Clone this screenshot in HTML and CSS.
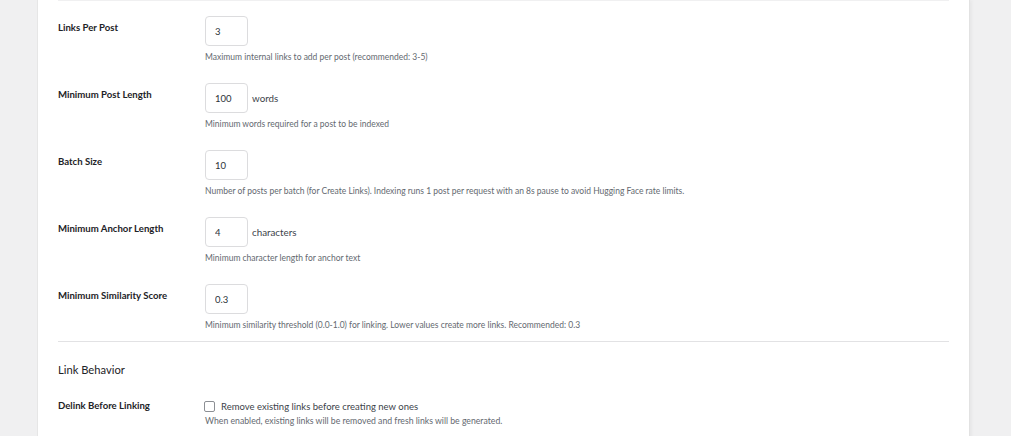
FILE: index.html
```html
<!DOCTYPE html>
<html lang="en">
<head>
<meta charset="utf-8">
<title>Settings</title>
<link rel="stylesheet" href="styles.css">
</head>
<body>
<div class="page">
  <div class="card">
    <hr class="sep sep-top">
    <div class="row">
      <div class="label">Links Per Post</div>
      <div class="field">
        <div class="control"><input class="num" type="text" value="3"></div>
        <p class="desc">Maximum internal links to add per post (recommended: 3-5)</p>
      </div>
    </div>
    <div class="row">
      <div class="label">Minimum Post Length</div>
      <div class="field">
        <div class="control"><input class="num" type="text" value="100"><span class="unit">words</span></div>
        <p class="desc">Minimum words required for a post to be indexed</p>
      </div>
    </div>
    <div class="row">
      <div class="label">Batch Size</div>
      <div class="field">
        <div class="control"><input class="num" type="text" value="10"></div>
        <p class="desc">Number of posts per batch (for Create Links). Indexing runs 1 post per request with an 8s pause to avoid Hugging Face rate limits.</p>
      </div>
    </div>
    <div class="row">
      <div class="label">Minimum Anchor Length</div>
      <div class="field">
        <div class="control"><input class="num" type="text" value="4"><span class="unit">characters</span></div>
        <p class="desc">Minimum character length for anchor text</p>
      </div>
    </div>
    <div class="row">
      <div class="label">Minimum Similarity Score</div>
      <div class="field">
        <div class="control"><input class="num" type="text" value="0.3"></div>
        <p class="desc">Minimum similarity threshold (0.0-1.0) for linking. Lower values create more links. Recommended: 0.3</p>
      </div>
    </div>
    <hr class="sep sep-mid">
    <h2 class="section-title">Link Behavior</h2>
    <div class="row row-check">
      <div class="label">Delink Before Linking</div>
      <div class="field">
        <label class="check"><span class="box"></span><span>Remove existing links before creating new ones</span></label>
        <p class="desc desc-check">When enabled, existing links will be removed and fresh links will be generated.</p>
      </div>
    </div>
  </div>
</div>
</body>
</html>
```
FILE: styles.css
```css
html, body {
  margin: 0;
  padding: 0;
  background: #f0f0f1;
  height: 100%;
  overflow: hidden;
}
body {
  font-family: "Lato", "Noto Sans", sans-serif;
  color: #1d2327;
}
.page {
  padding-left: 37px;
  width: 933px;
}
.card {
  background: #fff;
  border-left: 1px solid #e6e6e6;
  border-right: 1px solid #e2e2e2;
  box-shadow: 2px 0 3px rgba(0, 0, 0, 0.04);
  padding: 0 20px 40px;
  min-height: 436px;
  box-sizing: border-box;
}
.sep {
  border: 0;
  height: 1px;
  margin: 0;
}
.sep-top {
  background: #f0f0f1;
}
.sep-mid {
  background: #e2e2e4;
  margin-top: 5px;
}
.row {
  display: flex;
  height: 67px;
  box-sizing: border-box;
  padding-top: 15px;
}
.label {
  width: 147px;
  flex: none;
  font-size: 9.6px;
  font-weight: 700;
  line-height: 14px;
  padding-top: 5px;
  color: #1d2327;
}
.field {
  display: flex;
  flex-direction: column;
}
.control {
  display: flex;
  align-items: center;
  gap: 4px;
  height: 30px;
}
.num {
  width: 43px;
  height: 30px;
  box-sizing: border-box;
  border: 1px solid #dcdcde;
  border-radius: 4px;
  padding: 0 0 0 9px;
  font-family: inherit;
  font-size: 9.5px;
  color: #2c3338;
  background: #fff;
  outline: none;
}
.unit {
  font-size: 9.8px;
  color: #3c434a;
}
.desc {
  margin: 5px 0 0;
  font-size: 8.5px;
  line-height: 12px;
  color: #646970;
  white-space: nowrap;
}
.section-title {
  margin: 0;
  padding: 20px 0 0;
  font-size: 11.2px;
  font-weight: 400;
  line-height: 16px;
  height: 36px;
  box-sizing: border-box;
}
.row-check {
  padding-top: 21px;
}
.row-check .label {
  padding-top: 0;
}
.check {
  display: flex;
  align-items: center;
  gap: 6px;
  font-size: 9.5px;
  color: #3c434a;
  height: 14px;
  margin-left: -1px;
}
.box {
  width: 11px;
  height: 11px;
  box-sizing: border-box;
  border: 1px solid #8c8f94;
  border-radius: 2px;
  background: #fff;
}
.desc-check {
  margin-top: 2px;
  font-size: 8.7px;
}
```
